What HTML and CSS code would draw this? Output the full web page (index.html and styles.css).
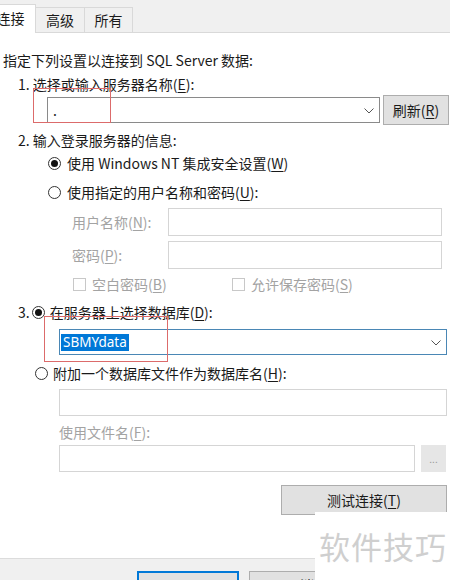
FILE: index.html
```html
<!DOCTYPE html>
<html lang="zh-CN">
<head>
<meta charset="utf-8">
<link rel="stylesheet" href="styles.css">
</head>
<body>
<div class="win">
  <div class="tabs">
    <div class="tab active">连接</div>
    <div class="tab">高级</div>
    <div class="tab">所有</div>
  </div>
  <div class="panel">
    <div class="row intro">指定下列设置以连接到 SQL Server 数据:</div>
    <div class="row step r-step1">1. 选择或输入服务器名称(<u>E</u>):</div>
    <div class="row combo-row">
      <div class="combo combo1"><span class="val">.</span><svg class="chev" width="10" height="6" viewBox="0 0 10 6"><polyline points="0.5,0.5 5,5 9.5,0.5" fill="none" stroke="#555" stroke-width="1"/></svg></div>
      <div class="btn refresh">刷新(<u>R</u>)</div>
    </div>
    <div class="row step r-step2">2. 输入登录服务器的信息:</div>
    <div class="row opt r-opt1"><span class="radio on"></span>使用 Windows NT 集成安全设置(<u>W</u>)</div>
    <div class="row opt r-opt2"><span class="radio"></span>使用指定的用户名称和密码(<u>U</u>):</div>
    <div class="row field r-user"><span class="lbl">用户名称(<u>N</u>):</span><div class="input dis w274"></div></div>
    <div class="row field r-pwd"><span class="lbl">密码(<u>P</u>):</span><div class="input dis w274"></div></div>
    <div class="row checks">
      <span class="chk-item first"><span class="chk"></span>空白密码(<u>B</u>)</span>
      <span class="chk-item second"><span class="chk"></span>允许保存密码(<u>S</u>)</span>
    </div>
    <div class="row step r-step3">3. <span class="radio on"></span>在服务器上选择数据库(<u>D</u>):</div>
    <div class="row r-combo2">
      <div class="combo combo2"><span class="sel">SBMYdata</span><svg class="chev" width="10" height="6" viewBox="0 0 10 6"><polyline points="0.5,0.5 5,5 9.5,0.5" fill="none" stroke="#555" stroke-width="1"/></svg></div>
    </div>
    <div class="row step r-opt3"><span class="radio"></span>附加一个数据库文件作为数据库名(<u>H</u>):</div>
    <div class="row r-attach"><div class="input dis w388"></div></div>
    <div class="row r-fnlbl gray">使用文件名(<u>F</u>):</div>
    <div class="row r-file"><div class="input dis w356"></div><div class="dots">...</div></div>
    <div class="row r-test"><div class="btn test">测试连接(<u>T</u>)</div></div>
  </div>
  <div class="footer">
    <div class="btn fbtn ok">确定</div>
    <div class="btn fbtn cancel">取消</div>
  </div>
  <div class="mark mark1"></div>
  <div class="mark mark2"></div>
  <div class="watermark">软件技巧</div>
</div>
</body>
</html>
```

FILE: styles.css
```css
html, body { margin: 0; padding: 0; }
.win {
  width: 450px; height: 580px; position: relative; overflow: hidden;
  background: #f0f0f0; color: #1a1a1a;
  font-family: "Noto Sans CJK SC", "Noto Sans", sans-serif; font-size: 14px;
}
u { text-decoration: underline; text-underline-offset: 2px; }
.tabs {
  height: 33px; box-sizing: border-box; display: flex; align-items: flex-end;
  border-bottom: 1px solid #d9d9d9; margin-left: -15px; width: 465px;
}
.tab {
  height: 25px; box-sizing: border-box; width: 50px; margin-left: -1px;
  border: 1px solid #d9d9d9; border-bottom: none; background: #f0f0f0;
  display: flex; align-items: center; justify-content: center; line-height: 1;
}
.tab.active {
  background: #fff; height: 29px; margin-bottom: -1px; margin-left: 0; width: 51px;
  padding-bottom: 3px;
}
.tab + .tab { width: 50px; }
.tab:last-child { width: 49px; }
.panel {
  background: #fff; height: 525px; box-sizing: border-box;
  display: flex; flex-direction: column;
}
.row { display: flex; align-items: center; height: 20px; flex: none; white-space: nowrap; }
.intro { margin-top: 17px; padding-left: 3px; }
.step { padding-left: 18px; }
.r-step1 { margin-top: 4px; }
.combo-row { margin-top: 1px; height: 30px; padding-left: 47px; }
.combo {
  box-sizing: border-box; height: 26px; border: 1px solid #8a8a8a; background: #fff;
  display: flex; align-items: center; position: relative;
}
.combo1 { width: 333px; }
.combo1 .val { padding-left: 5px; }
.chev { position: absolute; right: 5px; top: 10px; }
.btn {
  box-sizing: border-box; background: #e1e1e1; border: 1px solid #adadad;
  display: flex; align-items: center; justify-content: center;
}
.refresh { width: 66px; height: 30px; margin-left: 3px; }
.r-step2 { margin-top: 5px; }
.opt { padding-left: 48px; }
.r-opt1 { margin-top: 3px; }
.r-opt2 { margin-top: 9px; }
.radio {
  width: 13px; height: 13px; box-sizing: border-box; border: 1px solid #333;
  border-radius: 50%; margin-right: 6px; position: relative; flex: none; background: #fff;
}
.radio.on::after {
  content: ""; position: absolute; left: 2px; top: 2px; width: 7px; height: 7px;
  border-radius: 50%; background: #111;
}
.field { height: 28px; padding-left: 72px; color: #a3a3a3; }
.r-user { margin-top: 6px; }
.r-pwd { margin-top: 5px; }
.lbl { width: 96px; flex: none; }
.input { box-sizing: border-box; height: 28px; border: 1px solid #d5d5d5; background: #fff; flex: none; }
.w274 { width: 274px; }
.w388 { width: 388px; height: 27px; }
.w356 { width: 356px; height: 27px; }
.checks { margin-top: 5px; color: #a3a3a3; }
.chk-item { display: flex; align-items: center; }
.chk-item.first { margin-left: 73px; width: 159px; }
.chk {
  width: 13px; height: 13px; box-sizing: border-box; border: 1px solid #c8c8c8;
  margin-right: 6px; background: #fff;
}
.r-step3 { margin-top: 8px; }
.r-step3 .radio { margin-left: 2px; margin-right: 5px; }
.r-combo2 { margin-top: 7px; height: 26px; padding-left: 59px; }
.combo2 { width: 388px; border-color: #4a87b5; }
.combo2 .sel {
  background: #0078d7; color: #fff; margin-left: 1px; height: 17px; line-height: 17px;
  padding: 0 2px; font-size: 13.5px; font-family: "Noto Sans", sans-serif;
}
.r-opt3 { margin-top: 8px; padding-left: 35px; }
.r-opt3 .radio { margin-right: 5px; }
.r-attach { margin-top: 6px; height: 27px; padding-left: 59px; }
.r-fnlbl { margin-top: 6px; padding-left: 59px; }
.gray { color: #a3a3a3; }
.r-file { margin-top: 3px; height: 27px; padding-left: 59px; }
.dots {
  width: 25px; height: 27px; margin-left: 6px; background: #e6e6e6; color: #9a9a9a;
  display: flex; align-items: center; justify-content: center; font-size: 10px; box-sizing: border-box;
}
.r-test { margin-top: 13px; height: 30px; padding-left: 281px; }
.test { width: 166px; height: 30px; }
.footer {
  border-top: 1px solid #dcdcdc; height: 22px; display: flex; padding-top: 12px;
}
.fbtn { width: 102px; height: 30px; flex: none; align-items: flex-start; padding-top: 6px; line-height: 1; }
.ok { margin-left: 137px; border: 2px solid #0078d7; }
.cancel { margin-left: 10px; }
.mark { position: absolute; border: 1px solid #dc6b6b; box-sizing: border-box; }
.mark1 { left: 33px; top: 88px; width: 78px; height: 35px; }
.mark2 { left: 44px; top: 316px; width: 124px; height: 46px; }
.watermark {
  position: absolute; left: 315px; top: 512px; width: 135px; height: 68px;
  background: #fff; color: #cfcfcf; font-size: 31px; line-height: 1;
  display: flex; align-items: flex-start; padding: 18px 0 0 4px; box-sizing: border-box;
  letter-spacing: 1px;
}
```
